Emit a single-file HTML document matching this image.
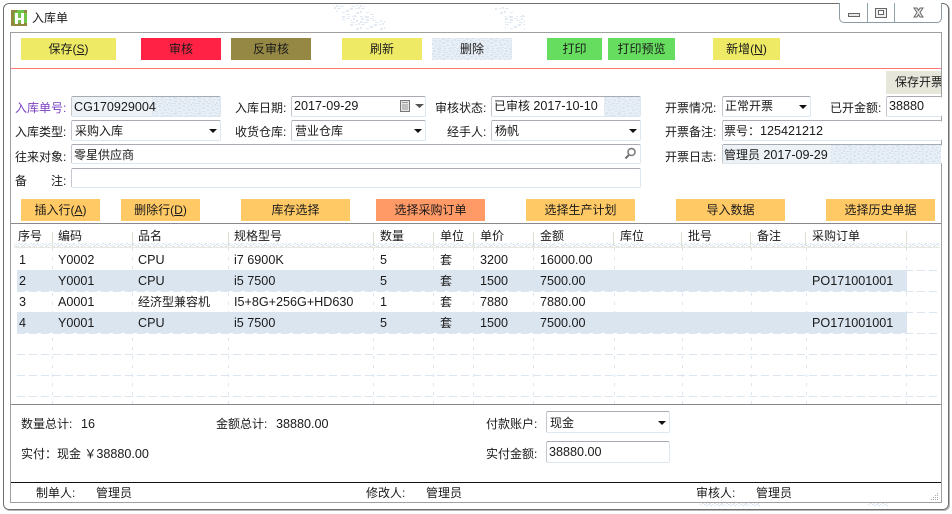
<!DOCTYPE html>
<html lang="zh">
<head>
<meta charset="utf-8">
<title>入库单</title>
<style>
html,body{margin:0;padding:0;background:#fff;}
body{position:relative;width:952px;height:514px;overflow:hidden;font-family:"Liberation Sans","Noto Sans CJK SC",sans-serif;font-size:12px;color:#1a1a1a;}
.a,.t,.b{position:absolute;box-sizing:border-box;}
.t{line-height:16px;white-space:nowrap;height:16px;}
.t i,.b i{font-style:normal;font-size:12.6px;}
.b{top:38px;height:22px;line-height:22px;text-align:center;white-space:nowrap;}
.o{top:199px;height:22px;line-height:22px;background:#ffc966;}
.f{position:absolute;box-sizing:border-box;border:1px solid #dde7f0;border-top-color:#a9abb2;border-left-color:#c4c8ce;border-radius:2px;background:#fff;}
u{text-decoration:underline;}
svg{position:absolute;left:0;top:0;}
</style>
</head>
<body>
<!-- window frame -->
<div class="a" style="left:3px;top:3px;width:946px;height:507px;border:1px solid #6e6e6e;border-radius:6px;box-shadow:1px 1px 0 #b8b8b8;"></div>
<div class="a" style="left:10px;top:32px;width:932px;height:471px;border:1px solid #a0a0a0;"></div>

<!-- texture, grid layer -->
<svg width="952" height="514" viewBox="0 0 952 514">
<defs>
<pattern id="d" width="24" height="16" patternUnits="userSpaceOnUse">
<rect width="24" height="16" fill="#e9eff6"/>
<path fill="#d9e4ef" d="M0 0h3v1h-3zM5 0h4v2h-4zM12 0h2v1h-2zM16 0h5v1h-5zM1 2h3v2h-3zM10 2h4v1h-4zM17 2h2v2h-2zM21 2h3v1h-3zM6 3h3v2h-3zM12 4h4v1h-4zM20 4h2v2h-2zM0 5h2v2h-2zM3 6h5v1h-5zM10 6h3v2h-3zM15 6h4v1h-4zM22 7h2v2h-2zM1 8h4v1h-4zM7 8h2v2h-2zM14 8h3v2h-3zM19 8h2v1h-2zM3 10h3v1h-3zM10 10h3v2h-3zM18 10h4v1h-4zM0 11h2v2h-2zM6 12h3v1h-3zM15 12h2v2h-2zM20 12h3v2h-3zM3 13h2v2h-2zM10 14h4v1h-4zM7 14h2v2h-2zM18 15h2v1h-2zM22 15h2v1h-2z"/>
</pattern>
<pattern id="e" width="24" height="16" patternUnits="userSpaceOnUse">
<path fill="#e2eaf3" d="M0 0h3v1h-3zM5 0h4v2h-4zM12 0h2v1h-2zM16 0h5v1h-5zM1 2h3v2h-3zM10 2h4v1h-4zM17 2h2v2h-2zM6 3h3v2h-3zM12 4h4v1h-4zM20 4h2v2h-2zM0 5h2v2h-2zM3 6h5v1h-5zM15 6h4v1h-4zM22 7h2v2h-2zM1 8h4v1h-4zM14 8h3v2h-3zM19 8h2v1h-2zM10 10h3v2h-3zM0 11h2v2h-2zM6 12h3v1h-3zM20 12h3v2h-3zM10 14h4v1h-4zM18 15h2v1h-2z"/>
</pattern>
<pattern id="s" width="12" height="4" patternUnits="userSpaceOnUse">
<path fill="#dce6f0" d="M0 0h2v1h-2zM4 0h1v1h-1zM8 0h2v1h-2zM2 1h2v1h-2zM6 1h1v1h-1zM10 1h2v1h-2zM0 2h1v1h-1zM4 2h3v1h-3zM9 2h2v1h-2zM1 3h2v1h-2zM6 3h2v1h-2zM10 3h1v1h-1z"/>
</pattern>
</defs>
<!-- title bar texture -->
<path fill="url(#e)" d="M333 5h32v7h-32zM342 12h34v8h-34zM350 20h35v10h-35zM495 7h18v8h-18zM505 15h20v15h-20z"/>
<!-- delete button texture -->
<rect x="432" y="38" width="80" height="22" fill="url(#d)"/>
<!-- grid -->
<g fill="none" stroke="#dce6f0">
<path stroke-dasharray="8 4" d="M17 270.500H940M17 291.500H940M17 312.500H940M17 333.500H940M17 354.500H940M17 375.500H940M17 396.500H940"/>
<path stroke-dasharray="3 6" d="M52.500 248V404M132.500 248V404M228.500 248V404M373.500 248V404M433.500 248V404M473.500 248V404M533.500 248V404M614.500 248V404M682.500 248V404M751.500 248V404M806.500 248V404M906.500 248V404"/>
</g>
<!-- table rows -->
<rect x="17" y="270" width="890" height="21" fill="#dbe5f0"/>
<rect x="17" y="312" width="890" height="21" fill="#dbe5f0"/>
<!-- header texture -->
<rect x="14" y="243" width="926" height="4" fill="url(#s)"/>
<line x1="14" y1="247.500" x2="940" y2="247.500" stroke="#e8e8de"/>
<!-- header separators -->
<path stroke="#dedfd2" fill="none" d="M52.500 232V246M132.500 232V246M228.500 232V246M373.500 232V246M433.500 232V246M473.500 232V246M533.500 232V246M613.500 232V246M681.500 232V246M750.500 232V246M805.500 232V246M906.500 231V246"/>
<!-- bottom leak texture -->
<path fill="url(#s)" d="M700 503h60v3h-60zM868 503h20v3h-20z"/>
</svg>

<!-- title -->
<svg width="30" height="30" viewBox="0 0 30 30" style="left:9px;top:8px;">
<rect x="2" y="2" width="16" height="16" fill="#6fc545"/>
<path fill="#8f8a3e" d="M2 2h3v16h-3zM5 15h13v3h-13zM15 2h3v3h-3zM2 2h6v2h-6z"/>
<path fill="#fff" d="M6 5h3v5h3v-5h3v11h-3v-4h-3v4h-3z"/>
</svg>
<div class="t" style="left:32px;top:10px;">入库单</div>

<!-- window controls -->
<div class="a" style="left:839px;top:3px;width:103px;height:20px;border:1px solid #8c9aa2;border-top:none;border-radius:0 0 5px 5px;background:#fff;"></div>
<svg width="952" height="30" viewBox="0 0 952 30">
<path stroke="#8fa3ab" fill="none" d="M867.500 3V22M894.500 3V22"/>
<rect x="848.500" y="13.500" width="11" height="3" fill="#e8e8e8" stroke="#666"/>
<rect x="875.500" y="8.500" width="11" height="9" fill="#eee" stroke="#666"/>
<rect x="878.500" y="10.500" width="5" height="4" fill="#fff" stroke="#666"/>
<path d="M914 8h3l1.500 2.500 1.500-2.500h3l-3 4.500 3 4.500h-3l-1.500-2.500-1.500 2.500h-3l3-4.500z" fill="#eee" stroke="#666" stroke-width="1"/>
</svg>

<!-- toolbar -->
<div class="b" style="left:21px;width:95px;background:#eeea66;">保存(<u>S</u>)</div>
<div class="b" style="left:141px;width:80px;background:#ff2244;">审核</div>
<div class="b" style="left:231px;width:80px;background:#958844;">反审核</div>
<div class="b" style="left:342px;width:80px;background:#eeea66;">刷新</div>
<div class="b" style="left:432px;width:80px;">删除</div>
<div class="b" style="left:547px;width:55px;background:#66dd5f;">打印</div>
<div class="b" style="left:608px;width:67px;background:#66dd5f;">打印预览</div>
<div class="b" style="left:713px;width:67px;background:#eeea66;">新增(<u>N</u>)</div>
<div class="a" style="left:11px;top:68px;width:930px;height:1px;background:#ff7777;"></div>
<div class="a" style="left:886px;top:71px;width:55px;height:23px;background:#e6e6da;overflow:hidden;line-height:22px;padding-left:9px;white-space:nowrap;">保存开票</div>

<!-- form fields -->
<div class="f" style="left:71px;top:96px;width:150px;height:21px;overflow:hidden;"><svg width="150" height="21"><rect width="80" height="21" fill="#edf2f7"/><rect x="80" width="70" height="21" fill="url(#d)"/></svg></div>
<div class="f" style="left:291px;top:96px;width:135px;height:21px;"></div>
<div class="f" style="left:491px;top:96px;width:150px;height:21px;overflow:hidden;"><svg width="150" height="21"><rect x="112" width="38" height="21" fill="url(#d)"/></svg></div>
<div class="f" style="left:722px;top:96px;width:89px;height:21px;"></div>
<div class="f" style="left:886px;top:96px;width:56px;height:21px;border-right:none;"></div>
<div class="f" style="left:71px;top:120px;width:150px;height:21px;"></div>
<div class="f" style="left:291px;top:120px;width:135px;height:21px;"></div>
<div class="f" style="left:491px;top:120px;width:150px;height:21px;"></div>
<div class="f" style="left:722px;top:120px;width:220px;height:21px;border-right:none;"></div>
<div class="f" style="left:71px;top:144px;width:570px;height:20px;"></div>
<div class="f" style="left:722px;top:144px;width:220px;height:20px;border-right:none;overflow:hidden;"><svg width="220" height="20"><rect width="110" height="20" fill="#edf2f7"/><rect x="108" width="110" height="20" fill="url(#d)"/></svg></div>
<div class="f" style="left:71px;top:168px;width:570px;height:20px;"></div>

<!-- form icons -->
<svg width="952" height="514" viewBox="0 0 952 514">
<g fill="#111">
<path d="M209 129h8l-4 4zM414 129h8l-4 4zM629 129h8l-4 4zM799 105h8l-4 4z"/>
</g>
<path d="M415 104h9l-4.500 4z" fill="#555"/>
<rect x="400.500" y="100.500" width="9" height="11" fill="#e6e6e6" stroke="#777"/>
<path d="M402 102.500h6M402 105h6M402 107h6M402 109h6" stroke="#999" stroke-width="1" fill="none"/>
<circle cx="631.500" cy="152" r="3.500" fill="none" stroke="#777" stroke-width="1.500"/>
<path d="M628.800 155L625.500 158.500" stroke="#666" stroke-width="2" fill="none"/>
</svg>

<!-- form labels and values -->
<div class="t" style="left:15px;top:100px;color:#7a3fc0;">入库单号:</div>
<div class="t" style="left:74px;top:99px;"><i>CG170929004</i></div>
<div class="t" style="left:235px;top:100px;">入库日期:</div>
<div class="t" style="left:294px;top:98px;"><i>2017-09-29</i></div>
<div class="t" style="left:435px;top:100px;">审核状态:</div>
<div class="t" style="left:494px;top:98px;">已审核 <i>2017-10-10</i></div>
<div class="t" style="left:665px;top:100px;">开票情况:</div>
<div class="t" style="left:725px;top:98px;">正常开票</div>
<div class="t" style="left:830px;top:100px;">已开金额:</div>
<div class="t" style="left:889px;top:98px;"><i>38880</i></div>

<div class="t" style="left:15px;top:124px;">入库类型:</div>
<div class="t" style="left:75px;top:123px;">采购入库</div>
<div class="t" style="left:235px;top:124px;">收货仓库:</div>
<div class="t" style="left:295px;top:123px;">营业仓库</div>
<div class="t" style="left:447px;top:124px;">经手人:</div>
<div class="t" style="left:495px;top:123px;">杨帆</div>
<div class="t" style="left:665px;top:124px;">开票备注:</div>
<div class="t" style="left:724px;top:123px;">票号：<i>125421212</i></div>

<div class="t" style="left:15px;top:149px;">往来对象:</div>
<div class="t" style="left:74px;top:147px;">零星供应商</div>
<div class="t" style="left:665px;top:149px;">开票日志:</div>
<div class="t" style="left:724px;top:147px;">管理员 <i>2017-09-29</i></div>

<div class="t" style="left:15px;top:173px;">备</div>
<div class="t" style="left:51px;top:173px;">注:</div>

<!-- action buttons -->
<div class="b o" style="left:21px;width:79px;">插入行(<u>A</u>)</div>
<div class="b o" style="left:121px;width:79px;">删除行(<u>D</u>)</div>
<div class="b o" style="left:241px;width:109px;">库存选择</div>
<div class="b o" style="left:376px;width:109px;background:#ff9966;">选择采购订单</div>
<div class="b o" style="left:526px;width:109px;">选择生产计划</div>
<div class="b o" style="left:676px;width:109px;">导入数据</div>
<div class="b o" style="left:826px;width:109px;">选择历史单据</div>

<div class="a" style="left:11px;top:223px;width:930px;height:1px;background:#8a8a8a;"></div>

<!-- table header -->
<div class="t" style="left:18px;top:228px;">序号</div>
<div class="t" style="left:58px;top:228px;">编码</div>
<div class="t" style="left:138px;top:228px;">品名</div>
<div class="t" style="left:234px;top:228px;">规格型号</div>
<div class="t" style="left:380px;top:228px;">数量</div>
<div class="t" style="left:440px;top:228px;">单位</div>
<div class="t" style="left:480px;top:228px;">单价</div>
<div class="t" style="left:540px;top:228px;">金额</div>
<div class="t" style="left:620px;top:228px;">库位</div>
<div class="t" style="left:688px;top:228px;">批号</div>
<div class="t" style="left:757px;top:228px;">备注</div>
<div class="t" style="left:812px;top:228px;">采购订单</div>

<!-- row 1 -->
<div class="t" style="left:19px;top:252px;"><i>1</i></div>
<div class="t" style="left:58px;top:252px;"><i>Y0002</i></div>
<div class="t" style="left:138px;top:252px;"><i>CPU</i></div>
<div class="t" style="left:234px;top:252px;"><i>i7 6900K</i></div>
<div class="t" style="left:380px;top:252px;"><i>5</i></div>
<div class="t" style="left:440px;top:252px;">套</div>
<div class="t" style="left:480px;top:252px;"><i>3200</i></div>
<div class="t" style="left:540px;top:252px;"><i>16000.00</i></div>
<!-- row 2 -->
<div class="t" style="left:19px;top:273px;"><i>2</i></div>
<div class="t" style="left:58px;top:273px;"><i>Y0001</i></div>
<div class="t" style="left:138px;top:273px;"><i>CPU</i></div>
<div class="t" style="left:234px;top:273px;"><i>i5 7500</i></div>
<div class="t" style="left:380px;top:273px;"><i>5</i></div>
<div class="t" style="left:440px;top:273px;">套</div>
<div class="t" style="left:480px;top:273px;"><i>1500</i></div>
<div class="t" style="left:540px;top:273px;"><i>7500.00</i></div>
<div class="t" style="left:812px;top:273px;"><i>PO171001001</i></div>
<!-- row 3 -->
<div class="t" style="left:19px;top:294px;"><i>3</i></div>
<div class="t" style="left:58px;top:294px;"><i>A0001</i></div>
<div class="t" style="left:138px;top:294px;">经济型兼容机</div>
<div class="t" style="left:234px;top:294px;"><i>I5+8G+256G+HD630</i></div>
<div class="t" style="left:380px;top:294px;"><i>1</i></div>
<div class="t" style="left:440px;top:294px;">套</div>
<div class="t" style="left:480px;top:294px;"><i>7880</i></div>
<div class="t" style="left:540px;top:294px;"><i>7880.00</i></div>
<!-- row 4 -->
<div class="t" style="left:19px;top:315px;"><i>4</i></div>
<div class="t" style="left:58px;top:315px;"><i>Y0001</i></div>
<div class="t" style="left:138px;top:315px;"><i>CPU</i></div>
<div class="t" style="left:234px;top:315px;"><i>i5 7500</i></div>
<div class="t" style="left:380px;top:315px;"><i>5</i></div>
<div class="t" style="left:440px;top:315px;">套</div>
<div class="t" style="left:480px;top:315px;"><i>1500</i></div>
<div class="t" style="left:540px;top:315px;"><i>7500.00</i></div>
<div class="t" style="left:812px;top:315px;"><i>PO171001001</i></div>

<!-- summary -->
<div class="a" style="left:11px;top:404px;width:930px;height:1px;background:#85858a;"></div>
<div class="t" style="left:21px;top:416px;">数量总计:</div>
<div class="t" style="left:81px;top:416px;"><i>16</i></div>
<div class="t" style="left:216px;top:416px;">金额总计:</div>
<div class="t" style="left:276px;top:416px;"><i>38880.00</i></div>
<div class="t" style="left:21px;top:446px;">实付：现金 ￥<i>38880.00</i></div>
<div class="t" style="left:486px;top:416px;">付款账户:</div>
<div class="f" style="left:546px;top:411px;width:124px;height:22px;"></div>
<div class="t" style="left:550px;top:415px;">现金</div>
<svg width="952" height="514" viewBox="0 0 952 514"><path d="M658 421h8l-4 4z" fill="#111"/></svg>
<div class="t" style="left:486px;top:446px;">实付金额:</div>
<div class="f" style="left:546px;top:441px;width:124px;height:22px;"></div>
<div class="t" style="left:549px;top:444px;"><i>38880.00</i></div>

<!-- footer -->
<div class="a" style="left:11px;top:482px;width:930px;height:1px;background:#111;"></div>
<div class="t" style="left:36px;top:485px;">制单人:</div>
<div class="t" style="left:96px;top:485px;">管理员</div>
<div class="t" style="left:366px;top:485px;">修改人:</div>
<div class="t" style="left:426px;top:485px;">管理员</div>
<div class="t" style="left:696px;top:485px;">审核人:</div>
<div class="t" style="left:756px;top:485px;">管理员</div>
<svg width="952" height="514" viewBox="0 0 952 514"><path fill="#a8a8a8" d="M937 493h1v1h-1zM935 495h1v1h-1zM937 495h1v1h-1zM933 497h1v1h-1zM935 497h1v1h-1zM937 497h1v1h-1zM931 499h1v1h-1zM933 499h1v1h-1zM935 499h1v1h-1zM937 499h1v1h-1z"/></svg>
</body>
</html>
